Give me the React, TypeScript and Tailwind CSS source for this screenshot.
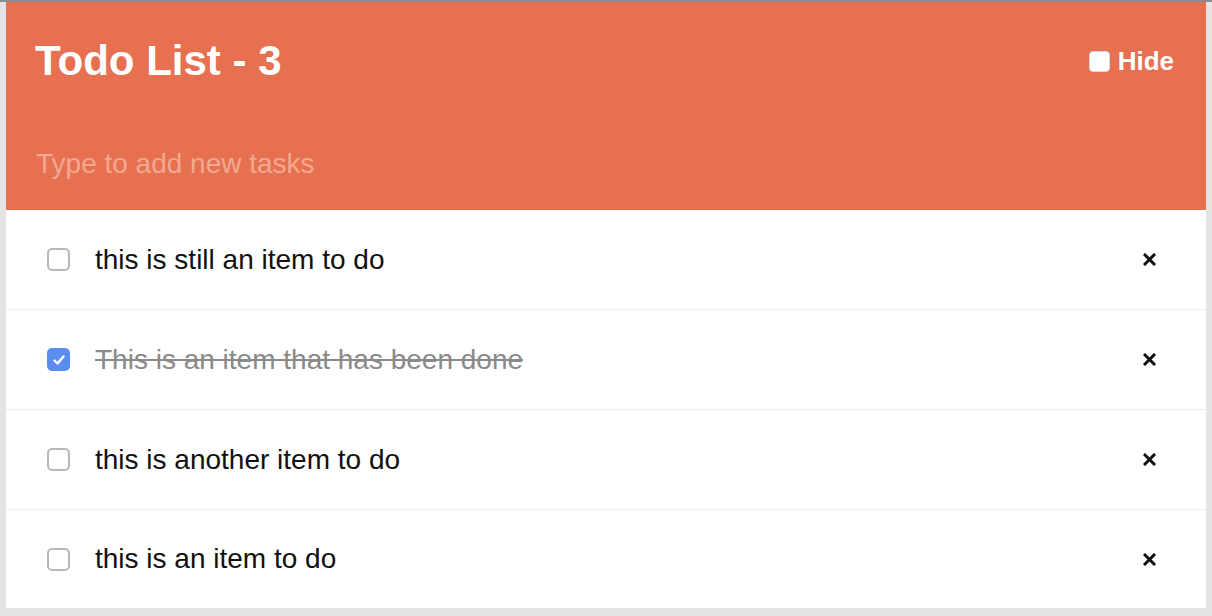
import React from "react"

const todos = [
    { text: "this is still an item to do", done: false },
    { text: "This is an item that has been done", done: true },
    { text: "this is another item to do", done: false },
    { text: "this is an item to do", done: false },
]

const Box = ({ checked }: { checked: boolean }) =>
    checked ? (
        <div className="w-[23px] h-[23px] rounded-[5px] bg-[#5a8def] flex items-center justify-center">
            <svg width="14" height="14" viewBox="0 0 14 14">
                <path d="M2.5 7.5 L5.5 10.5 L11.5 3.5" fill="none" stroke="white" strokeWidth="2.4" strokeLinecap="round" strokeLinejoin="round" />
            </svg>
        </div>
    ) : (
        <div className="w-[23px] h-[23px] rounded-[5px] border-2 border-[#b8b8b8] bg-white" />
    )

const Cross = () => (
    <svg width="13" height="13" viewBox="0 0 13 13">
        <path d="M2 2 L11 11 M11 2 L2 11" stroke="#111" strokeWidth="3" strokeLinecap="square" />
    </svg>
)

export default function App() {
    return (
        <div className="w-[1212px] h-[616px] bg-[#e4e4e4] border-t-2 border-[#8c8c8c] px-[6px] font-['Liberation_Sans',Arial,sans-serif]">
            <div className="bg-white">
                {/* Header */}
                <div className="h-[208px] bg-[#e6704f] flex flex-col">
                    <div className="flex items-start justify-between pt-[38px] pl-[29px] pr-[32px]">
                        <h1 className="text-[42px] leading-[41px] font-bold text-white">Todo List - 3</h1>
                        <label className="flex items-center gap-[8px] mt-[6px] text-white text-[26px] font-bold leading-[30px]">
                            <span className="w-[21px] h-[21px] rounded-[4px] bg-white border border-[#d8d8d8]" />
                            Hide
                        </label>
                    </div>
                    <input
                        className="mt-[67px] ml-[30px] w-[600px] bg-transparent outline-none text-[28px] leading-[28px] text-white placeholder:text-[#f3a890]"
                        placeholder="Type to add new tasks"
                    />
                </div>

                {/* Items */}
                {todos.map((t, i) => (
                    <div
                        key={i}
                        className={`flex items-center pl-[41px] pr-[50px] ${i < todos.length - 1 ? "h-[100px] border-b border-[#ececec]" : "h-[98px]"}`}
                    >
                        <Box checked={t.done} />
                        <span className={`ml-[25px] text-[28px] leading-[32px] ${t.done ? "text-[#8a8a8a] line-through" : "text-[#111]"}`}>
                            {t.text}
                        </span>
                        <div className="ml-auto">
                            <Cross />
                        </div>
                    </div>
                ))}
            </div>
        </div>
    )
}
